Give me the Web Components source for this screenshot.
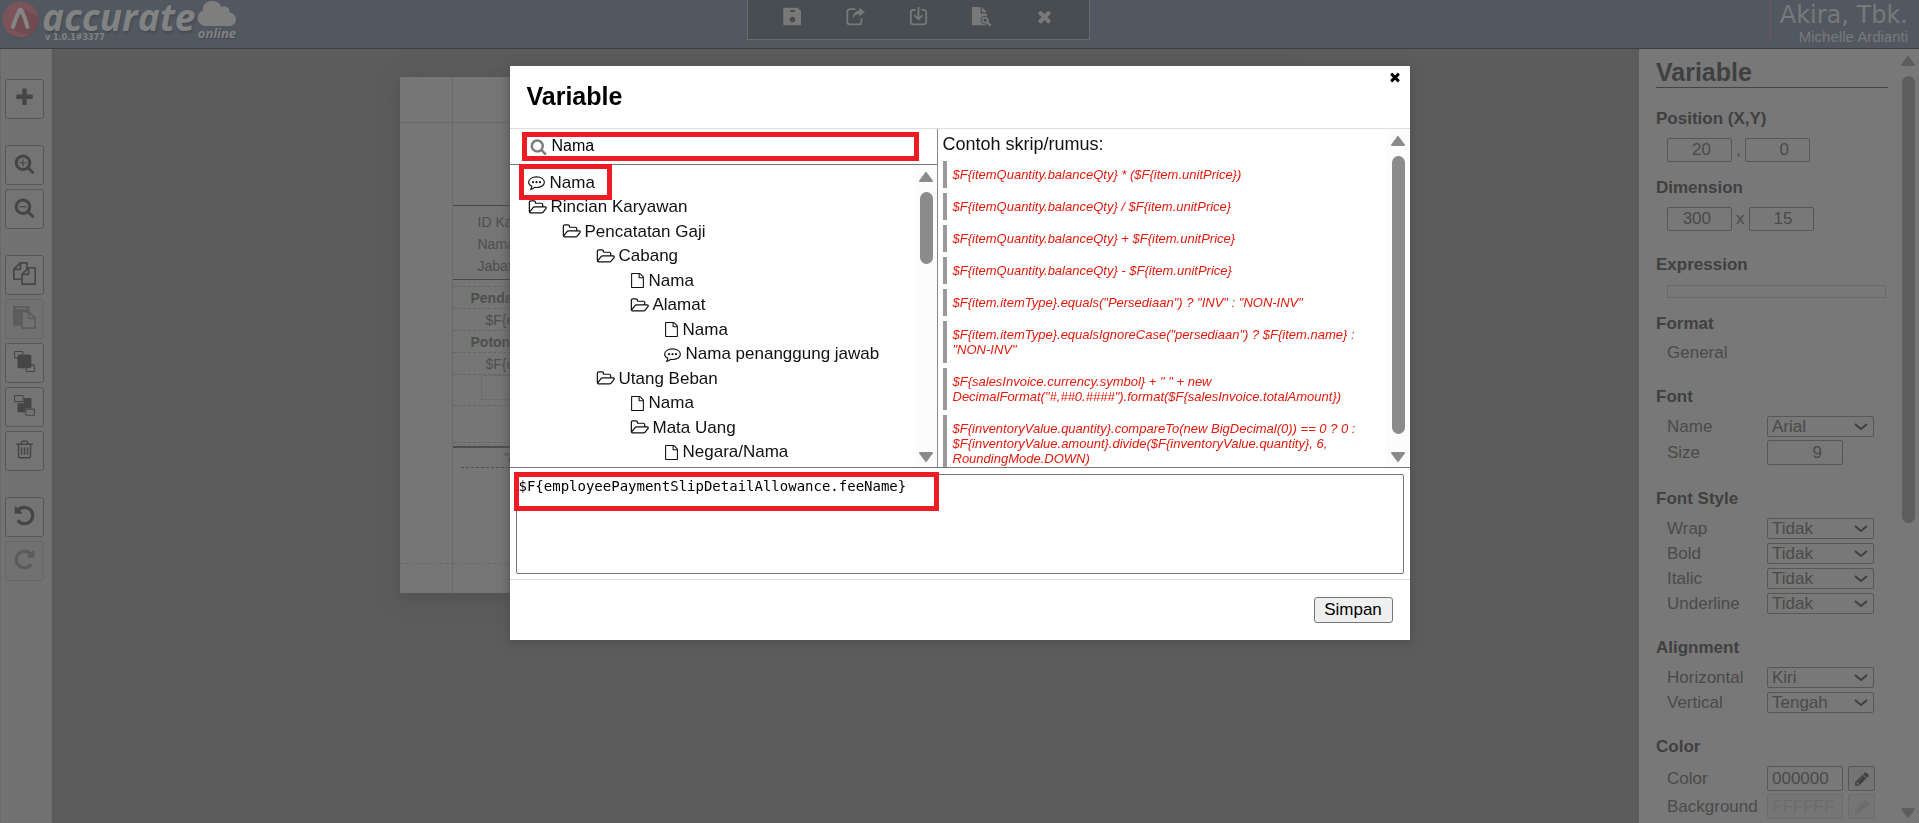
<!DOCTYPE html>
<html lang="id">
<head>
<meta charset="utf-8">
<title>Variable</title>
<style>
  html, body { height: 100%; }
  body {
    margin: 0;
    overflow: hidden;
    background: #5c5c5c;
    font-family: "Liberation Sans", Arial, sans-serif;
    font-size: 17px;
    color: #464646;
  }
</style>
</head>
<body>
<report-designer></report-designer>

<script>
const ICONS = {
  plus: '<path d="M1600 736v192q0 40-28 68t-68 28h-416v416q0 40-28 68t-68 28h-192q-40 0-68-28t-28-68v-416h-416q-40 0-68-28t-28-68v-192q0-40 28-68t68-28h416v-416q0-40 28-68t68-28h192q40 0 68 28t28 68v416h416q40 0 68 28t28 68z"/>',
  search: '<path d="M1216 832q0-185-131.5-316.5t-316.5-131.5-316.5 131.5-131.5 316.5 131.5 316.5 316.5 131.5 316.5-131.5 131.5-316.5zm512 832q0 52-38 90t-90 38q-54 0-90-38l-343-342q-179 124-399 124-143 0-273.5-55.5t-225-150-150-225-55.5-273.5 55.5-273.5 150-225 225-150 273.5-55.5 273.5 55.5 225 150 150 225 55.5 273.5q0 220-124 399l343 343q37 37 37 90z"/>',
  copy: '<path d="M1696 384q40 0 68 28t28 68v1216q0 40-28 68t-68 28h-960q-40 0-68-28t-28-68v-288h-544q-40 0-68-28t-28-68v-672q0-40 20-88t48-76l408-408q28-28 76-48t88-20h416q40 0 68 28t28 68v328q68-40 128-40h416zm-544 213l-299 299h299v-299zm-640-384l-299 299h299v-299zm196 647l316-316v-416h-384v416q0 40-28 68t-68 28h-416v640h512v-256q0-40 20-88t48-76zm956 804v-1152h-384v416q0 40-28 68t-68 28h-416v640h896z"/>',
  paste: '<path d="M768 1664h896v-640h-416q-40 0-68-28t-28-68v-416h-384v1152zm256-1440v-64q0-13-9.5-22.5t-22.5-9.5h-704q-13 0-22.5 9.5t-9.5 22.5v64q0 13 9.5 22.5t22.5 9.5h704q13 0 22.5-9.5t9.5-22.5zm256 672h299l-299-299v299zm512 128v672q0 40-28 68t-68 28h-960q-40 0-68-28t-28-68v-160h-544q-40 0-68-28t-28-68v-1344q0-40 28-68t68-28h1088q40 0 68 28t28 68v328q21 13 36 28l408 408q28 28 48 76t20 88z"/>',
  front: '<g fill="none" stroke="currentColor" stroke-width="90"><rect x="45" y="45" width="700" height="540" rx="60"/><rect x="1045" y="1205" width="700" height="540" rx="60"/></g><rect x="300" y="300" width="1180" height="1180" rx="150"/>',
  back: '<path d="M840 260h560q90 0 90 90v780h-540v350h-560q-90 0-90-90v-690h540z"/><g fill="none" stroke="currentColor" stroke-width="90"><rect x="45" y="45" width="740" height="520" rx="60"/><rect x="1005" y="1205" width="740" height="520" rx="60"/></g>',
  trash: '<path d="M704 736v576q0 14-9 23t-23 9h-64q-14 0-23-9t-9-23v-576q0-14 9-23t23-9h64q14 0 23 9t9 23zm256 0v576q0 14-9 23t-23 9h-64q-14 0-23-9t-9-23v-576q0-14 9-23t23-9h64q14 0 23 9t9 23zm256 0v576q0 14-9 23t-23 9h-64q-14 0-23-9t-9-23v-576q0-14 9-23t23-9h64q14 0 23 9t9 23zm128 724v-948h-896v948q0 22 7 40.5t14.5 27 10.5 8.5h832q3 0 10.5-8.5t14.5-27 7-40.5zm-672-1076h448l-48-117q-7-9-17-11h-317q-10 2-17 11zm928 32v64q0 14-9 23t-23 9h-96v948q0 83-47 143.5t-113 60.5h-832q-66 0-113-58.5t-47-141.5v-952h-96q-14 0-23-9t-9-23v-64q0-14 9-23t23-9h309l70-167q15-37 54-63t79-26h320q40 0 79 26t54 63l70 167h309q14 0 23 9t9 23z"/>',
  undo: '<path d="M1664 896q0 156-61 298t-164 245-245 164-298 61q-172 0-327-72.5t-264-204.5q-7-10-6.5-22.5t8.5-20.5l137-138q10-9 25-9 16 2 23 12 73 95 179 147t225 52q104 0 198.5-40.5t163.5-109.5 109.5-163.5 40.5-198.5-40.5-198.5-109.5-163.5-163.5-109.5-198.5-40.5q-98 0-188 35.5t-160 101.5l137 138q31 30 14 69-17 40-59 40h-448q-26 0-45-19t-19-45v-448q0-42 40-59 39-17 69 14l130 129q107-101 244.5-156.5t284.5-55.5q156 0 298 61t245 164 164 245 61 298z"/>',
  folder: '<path d="M1845 931q0-35-53-35h-1088q-40 0-85.500 21.500t-71.500 52.500l-294 363q-18 24-18 40 0 35 53 35h1088q40 0 86-22t71-53l294-363q18-22 18-39zm-1141-163h768v-160q0-40-28-68t-68-28h-576q-40 0-68-28t-28-68v-64q0-40-28-68t-68-28h-320q-40 0-68 28t-28 68v853l256-315q44-53 116-87.500t140-34.500zm1269 163q0 62-46 120l-295 363q-43 53-116 87.500t-140 34.500h-1088q-92 0-158-66t-66-158v-960q0-92 66-158t158-66h320q92 0 158 66t66 158v32h544q92 0 158 66t66 158v160h192q54 0 99 24.500t67 70.500q15 32 15 68z"/>',
  file: '<path d="M1596 380q28 28 48 76t20 88v1152q0 40-28 68t-68 28h-1344q-40 0-68-28t-28-68v-1600q0-40 28-68t68-28h896q40 0 88 20t76 48zm-444-244v376h376q-10-29-22-41l-313-313q-12-12-41-22zm384 1528v-1024h-416q-40 0-68-28t-28-68v-416h-768v1536h1280z"/>',
  comment: '<path fill="none" stroke="currentColor" stroke-width="120" stroke-linejoin="round" d="M896 300c470 0 830 240 830 560s-360 560-830 560q-100 0-190-14-190 190-440 230 130-150 140-340-340-180-340-436c0-320 360-560 830-560z"/><circle cx="530" cy="860" r="115"/><circle cx="896" cy="860" r="115"/><circle cx="1262" cy="860" r="115"/>',
  pencil: '<path d="M491 1536l91-91-235-235-91 91v107h128v128h107zm523-928q0-22-22-22-10 0-17 7l-542 542q-7 7-7 17 0 22 22 22 10 0 17-7l542-542q7-7 7-17zm-54-192l416 416-832 832h-416v-416zm683 96q0 53-37 90l-166 166-416-416 166-165q36-38 90-38 53 0 91 38l235 234q37 39 37 91z"/>',
  close: '<path d="M1490 1322q0 40-28 68l-136 136q-28 28-68 28t-68-28l-294-294-294 294q-28 28-68 28t-68-28l-136-136q-28-28-28-68t28-68l294-294-294-294q-28-28-28-68t28-68l136-136q28-28 68-28t68 28l294 294 294-294q28-28 68-28t68 28l136 136q28 28 28 68t-28 68l-294 294 294 294q28 28 28 68z"/>',
  save: '<path fill-rule="evenodd" d="M90 60h1290l320 320v1250q0 90-90 90h-1520q-60 0-60-60v-1540q0-60 60-60zm610 220v190h420v-190zm190 640a270 270 0 1 0 1 0z"/>',
  share: '<path fill="none" stroke="currentColor" stroke-width="170" d="M900 205h-520q-260 0-260 260v920q0 260 260 260h820q260 0 260-260v-330"/><path d="M1250 60l540 420-540 420v-240q-440-10-600 440-60-640 600-800z"/>',
  download: '<path fill="none" stroke="currentColor" stroke-width="170" d="M620 265h-200q-250 0-250 250v880q0 250 250 250h950q250 0 250-250v-880q0-250-250-250h-200"/><path d="M810 0h170v960l250-250 120 120-455 455-455-455 120-120 250 250z"/>',
  preview: '<path d="M60 0h760v620h580v1100h-1340q-60 0-60-60v-1600q0-60 60-60zm880 0l460 500h-460z"/><path fill="none" stroke="#484d51" stroke-width="420" stroke-linecap="round" d="M1250 1250l420 420"/><circle cx="1240" cy="1240" r="420" fill="#484d51"/><circle cx="1240" cy="1240" r="240" fill="none" stroke="currentColor" stroke-width="170"/><path fill="none" stroke="currentColor" stroke-width="230" stroke-linecap="round" d="M1470 1470l230 230"/>'
};
ICONS.zoomin = ICONS.search + '<path d="M448 784h272v-272h96v272h272v96h-272v272h-96v-272h-272z"/>';
ICONS.zoomout = ICONS.search + '<path d="M448 784h640v96h-640z"/>';
ICONS.redo = '<g transform="translate(1792 0) scale(-1 1)">' + ICONS.undo + "</g>";

// Small helper: every element clones one template into an open root
function define(name, html, setup) {
  const template = document.createElement("template");
  template.innerHTML = html;
  window.customElements.define(name, class extends HTMLElement {
    constructor() {
      super();
      this.attachShadow({ mode: "open" });
      this.shadowRoot.appendChild(template.content.cloneNode(true));
    }
    connectedCallback() {
      if (setup) setup(this, this.shadowRoot);
    }
  });
}

define("ui-icon", `
  <style>
    :host { display: inline-flex; flex: none; width: var(--icon-width, var(--icon-size, 18px)); height: var(--icon-size, 18px); }
    svg { width: 100%; height: 100%; fill: currentColor; overflow: visible; }
  </style>
  <svg aria-hidden="true"></svg>
`, (host, root) => {
  const svg = root.querySelector("svg");
  const name = host.getAttribute("name");
  svg.setAttribute("viewBox", name === "folder" ? "0 0 1973 1792" : "0 0 1792 1792");
  svg.innerHTML = ICONS[name];
});

define("scroll-rail", `
  <style>
    :host { display: flex; flex-direction: column; align-items: center; gap: 10px; flex: none; width: 23px; box-sizing: border-box; padding: 7px 0 5px; color: #8b8b8b; }
    svg { flex: none; width: 14px; height: 10px; fill: currentColor; stroke: currentColor; stroke-linejoin: round; stroke-width: 2; }
    .track { flex: 1; width: 13px; min-height: 0; }
    .thumb { height: var(--thumb, 50%); border-radius: 7px; background: currentColor; }
  </style>
  <svg viewBox="0 0 14 10"><path d="M7 1l6 8h-12z"/></svg>
  <div class="track"><div class="thumb"></div></div>
  <svg viewBox="0 0 14 10"><path d="M7 9l6-8h-12z"/></svg>
`);

define("brand-logo", `
  <style>
    :host { display: flex; align-items: flex-start; color: #828282; padding: 1px 2px; }
    .badge { width: 38px; height: 38px; }
    .words { display: flex; flex-direction: column; margin-left: 2px; }
    .name { font: italic bold 37px/32px "Open Sans", sans-serif; text-shadow: 1px 2px 2px #454b54; }
    .version { font: bold 8px/10px "DejaVu Sans", sans-serif; margin-left: 3px; }
    .cloud { display: flex; flex-direction: column; align-items: center; margin-left: 2px; }
    .cloud svg { width: 39px; height: 25px; }
    .online { font: italic bold 13px/15px "Open Sans", sans-serif; text-shadow: 1px 1px 1px #454b54; }
  </style>
  <svg class="badge" viewBox="0 0 38 38">
    <circle cx="19" cy="19.500" r="18" fill="#494f58"/>
    <circle cx="18.500" cy="18.500" r="18" fill="#7b545a"/>
    <path d="M18.500 7L36 15a18 18 0 0 1-9 19.500L10 28z" fill="#704b51"/>
    <path d="M11 26c2-7 5-13 6.500-16.500q1-2 2 0c2 4 4.500 10 6 16.500" fill="none" stroke="#858585" stroke-width="4" stroke-linecap="round"/>
  </svg>
  <div class="words"><span class="name">accurate</span><span class="version">v 1.0.1#3377</span></div>
  <div class="cloud">
    <svg viewBox="0 0 39 25" fill="#7e7e7e"><path d="M8 25a8 8 0 0 1-2-15.500C5 3 10 0 15.500 0 20 0 23 2 24.500 6c4-2 8.500 1 8 5.500 4 .5 6.500 3.500 6.500 7 0 4-3 6.500-7 6.500z"/></svg>
    <span class="online">online</span>
  </div>
`);

define("app-header", `
  <style>
    :host { display: grid; grid-template-columns: 1fr 343px calc(50% - 130px); box-sizing: border-box; height: 49px; background: #515861; border-bottom: 1px solid #3f3f3f; color: #797979; }
    nav { display: flex; justify-content: center; gap: 44px; height: 40px; box-sizing: border-box; padding-top: 7px; background: #484d51; border: 1px solid #6a6a6a; border-top: 0; }
    button { display: flex; padding: 0; border: 0; background: none; color: inherit; --icon-size: 19px; }
    .company { justify-self: end; height: 44px; padding: 0 11px 0 9px; border-left: 1px solid #72545a; text-align: right; }
    .name { font: 24px/30px "DejaVu Sans", sans-serif; }
    .user { font-size: 15px; line-height: 14px; }
  </style>
  <brand-logo></brand-logo>
  <nav>
    <button aria-label="Simpan"><ui-icon name="save"></ui-icon></button>
    <button aria-label="Ekspor"><ui-icon name="share"></ui-icon></button>
    <button aria-label="Unduh"><ui-icon name="download"></ui-icon></button>
    <button aria-label="Pratinjau"><ui-icon name="preview"></ui-icon></button>
    <button aria-label="Tutup"><ui-icon name="close"></ui-icon></button>
  </nav>
  <div class="company"><div class="name">Akira, Tbk.</div><div class="user">Michelle Ardianti</div></div>
`);

define("tool-rail", `
  <style>
    :host { display: flex; flex-direction: column; gap: 26px; box-sizing: border-box; width: 52px; padding: 30px 8px 0 4px; background: #727272; border-left: 1px solid #696969; border-right: 1px solid #6c6c6c; --icon-size: 21px; }
    div { display: grid; gap: 4px; }
    button { display: flex; align-items: center; justify-content: center; width: 39px; height: 40px; padding: 0 0 4px; border: 1px solid #575757; border-radius: 3px; background: #747474; color: #454545; }
    button:disabled { border-color: #686868; background: #717171; color: #5c5c5c; }
    .wide { --icon-size: 23px; }
  </style>
  <div><button aria-label="Tambah"><ui-icon name="plus"></ui-icon></button></div>
  <div>
    <button aria-label="Perbesar"><ui-icon name="zoomin"></ui-icon></button>
    <button aria-label="Perkecil"><ui-icon name="zoomout"></ui-icon></button>
  </div>
  <div>
    <button class="wide" aria-label="Salin"><ui-icon name="copy"></ui-icon></button>
    <button class="wide" aria-label="Tempel" disabled><ui-icon name="paste"></ui-icon></button>
    <button aria-label="Ke depan"><ui-icon name="front"></ui-icon></button>
    <button aria-label="Ke belakang"><ui-icon name="back"></ui-icon></button>
    <button aria-label="Hapus"><ui-icon name="trash"></ui-icon></button>
  </div>
  <div>
    <button class="wide" aria-label="Urungkan"><ui-icon name="undo"></ui-icon></button>
    <button class="wide" aria-label="Ulangi" disabled><ui-icon name="redo"></ui-icon></button>
  </div>
`);

define("report-page", `
  <style>
    :host { display: grid; grid-template: 46px 1fr 30px / 53px 1fr; width: 892px; min-height: 516px; background: #767676; box-shadow: 0 4px 18px #505050; color: #4e4e4e; font-size: 14px; }
    .edge { border-bottom: 1px solid #696969; border-right: 1px solid #696969; }
    .foot { border-top: 1px dashed #696969; border-right: 1px solid #696969; }
    .body { border-right: 1px solid #696969; }
    .title { height: 82px; border-bottom: 1px solid #484848; }
    .info { padding: 5px 25px 2px; line-height: 22px; border-bottom: 1px solid #484848; }
    .band { box-sizing: border-box; height: 22px; line-height: 22px; padding-left: 33px; border-bottom: 1px dashed #666; }
    .gap { height: 7px; }
    .head { padding-left: 18px; font-weight: bold; }
    .total { height: 31px; padding: 0 0 6px 28px; }
    .total span { display: block; height: 23px; border: 1px solid #6c6c6c; }
    .blank { height: 37px; }
    .rule { height: 3px; border-bottom: 2px solid #4d4d4d; }
    .terbilang { height: 20px; margin-left: 8px; padding-left: 43px; border-bottom: 1px dashed #505050; line-height: 19px; font-size: 13px; font-style: italic; }
  </style>
  <div class="edge"></div><div class="edge"></div>
  <div class="body"></div>
  <div>
    <div class="title"></div>
    <div class="info">ID Karyawan<br>Nama<br>Jabatan</div>
    <div class="band gap"></div>
    <div class="band head">Pendapatan</div>
    <div class="band">$F{employee}</div>
    <div class="band head">Potongan</div>
    <div class="band">$F{employee}</div>
    <div class="band total"><span></span></div>
    <div class="band blank"></div>
    <div class="rule"></div>
    <div class="band terbilang">"Pembayaran"</div>
  </div>
  <div class="foot"></div><div class="foot"></div>
`);

define("property-section", `
  <style>
    :host { display: block; padding-bottom: 24px; }
    :host([tight]) { padding-bottom: 16px; }
    h3 { margin: 0 0 9px; font-size: 17px; line-height: 20px; color: #404040; }
    .rows { display: grid; gap: 3px; padding-left: 11px; }
    :host([loose]) .rows { gap: 4px; }
  </style>
  <h3></h3><div class="rows"><slot></slot></div>
`, (host, root) => { root.querySelector("h3").textContent = host.getAttribute("heading"); });

define("property-row", `
  <style>
    :host { display: grid; grid-template-columns: 100px auto 1fr; align-items: center; }
    label { line-height: 20px; }
    select, input { box-sizing: border-box; margin: 0; border: 1px solid #575757; border-radius: 2px; background: #787878; color: #4a4a4a; font: 17px/19px "Liberation Sans", Arial, sans-serif; }
    select { width: 107px; height: 21px; padding: 0 4px; appearance: none; background-repeat: no-repeat; background-position: right 5px center; background-image: url("data:image/svg+xml,%3Csvg xmlns='http://www.w3.org/2000/svg' width='14' height='9' viewBox='0 0 14 9'%3E%3Cpath d='M1 2l6 5 6-5' fill='none' stroke='%23404040' stroke-width='2'/%3E%3C/svg%3E"); }
    input { width: 76px; height: 25px; padding: 0 4px; }
    input.number { text-align: right; padding-right: 20px; }
    button { display: flex; align-items: center; justify-content: center; width: 27px; height: 25px; margin-left: 5px; padding: 0; border: 1px solid #575757; border-radius: 2px; background: #747474; color: #404040; --icon-size: 16px; }
    :disabled { border-color: #6c6c6c; color: #6c6c6c; background: #757575; }
  </style>
  <label for="field"></label>
`, (host, root) => {
  const value = host.getAttribute("value");
  const kind = host.getAttribute("kind");
  const off = host.hasAttribute("disabled") ? "disabled" : "";
  root.querySelector("label").textContent = host.getAttribute("label");
  const box = document.createElement("template");
  if (kind === "select") box.innerHTML = `<select id="field"><option>${value}</option></select>`;
  else box.innerHTML = `<input id="field" class="${kind}" value="${value}" ${off}>`;
  if (kind === "color") box.innerHTML += `<button aria-label="Ubah warna" ${off}><ui-icon name="pencil"></ui-icon></button>`;
  root.appendChild(box.content);
});

define("property-panel", `
  <style>
    :host { display: flex; width: 280px; background: #787878; overflow: hidden; color: #4a4a4a; }
    .content { flex: 1; min-width: 0; padding: 8px 8px 0 17px; }
    h2 { margin: 0 0 21px; width: 232px; font-size: 25px; line-height: 30px; border-bottom: 1px solid #444; color: #404040; }
    .pair { display: flex; align-items: center; gap: 4px; }
    .pair input { box-sizing: border-box; width: 65px; height: 24px; margin: 0; padding: 0 20px 0 4px; border: 1px solid #575757; border-radius: 2px; background: #787878; color: #4a4a4a; font: 17px "Liberation Sans", Arial, sans-serif; text-align: right; }
    .sep { min-width: 5px; }
    .expression { box-sizing: border-box; width: 219px; height: 13px; margin: 1px 0 0; padding: 0; border: 1px solid #6a6a6a; background: #787878; }
    .text { line-height: 20px; }
    scroll-rail { color: #5e5e5e; width: 22px; --thumb: 447px; }
  </style>
  <div class="content">
    <h2>Variable</h2>
    <property-section heading="Position (X,Y)" tight>
      <div class="pair"><input aria-label="X" value="20"><span class="sep">,</span><input aria-label="Y" value="0"></div>
    </property-section>
    <property-section heading="Dimension">
      <div class="pair"><input aria-label="Width" value="300"><span class="sep">x</span><input aria-label="Height" value="15"></div>
    </property-section>
    <property-section heading="Expression" tight><input class="expression" aria-label="Expression"></property-section>
    <property-section heading="Format"><div class="text">General</div></property-section>
    <property-section heading="Font">
      <property-row label="Name" kind="select" value="Arial"></property-row>
      <property-row label="Size" kind="number" value="9"></property-row>
    </property-section>
    <property-section heading="Font Style" loose>
      <property-row label="Wrap" kind="select" value="Tidak"></property-row>
      <property-row label="Bold" kind="select" value="Tidak"></property-row>
      <property-row label="Italic" kind="select" value="Tidak"></property-row>
      <property-row label="Underline" kind="select" value="Tidak"></property-row>
    </property-section>
    <property-section heading="Alignment" loose>
      <property-row label="Horizontal" kind="select" value="Kiri"></property-row>
      <property-row label="Vertical" kind="select" value="Tengah"></property-row>
    </property-section>
    <property-section heading="Color">
      <property-row label="Color" kind="color" value="000000"></property-row>
      <property-row label="Background" kind="color" value="FFFFFF" disabled></property-row>
    </property-section>
  </div>
  <scroll-rail></scroll-rail>
`);

define("tree-item", `
  <style>
    :host { display: flex; align-items: center; gap: 5px; padding-left: calc(var(--level, 0) * 34px); white-space: nowrap; position: relative; --icon-size: 17px; }
    :host([icon="folder"]) { --icon-width: 19px; gap: 4px; }
    :host([icon="file"]) { --icon-width: 15px; gap: 4px; }
    :host([marked])::after { content: ""; position: absolute; left: -9px; top: -7px; width: 83px; height: 26px; border: 5px solid #ed1c24; }
  </style>
  <span><slot></slot></span>
`, (host, root) => {
  host.style.setProperty("--level", host.getAttribute("level") || 0);
  const icon = document.createElement("ui-icon");
  icon.setAttribute("name", host.getAttribute("icon"));
  root.querySelector("span").before(icon);
});

define("script-sample", `
  <style>
    :host { display: block; padding: 6px 0 6px 6px; border-left: 4px solid #999; color: #e2190b; font-size: 13px; font-style: italic; line-height: 15px; }
  </style>
  <slot></slot>
`);

define("variable-dialog", `
  <style>
    :host { display: block; width: 900px; background: #fff; color: #111; box-shadow: 0 2px 10px #4c4c4c; }
    header { display: flex; justify-content: space-between; box-sizing: border-box; height: 63px; padding: 14px 8px 0 17px; border-bottom: 1px solid #ddd; }
    h1 { margin: 0; font-size: 25px; line-height: 32px; color: #000; }
    .close { display: flex; align-self: flex-start; margin: -10px 0 0; padding: 0; border: 0; background: none; color: #000; --icon-size: 14px; }
    .panes { display: grid; grid-template-columns: 428px 1fr; height: 338px; border-bottom: 1px solid #777; }
    .left { display: grid; grid-template-rows: 36px 1fr; min-height: 0; border-right: 1px solid #888; }
    .search { display: flex; box-sizing: border-box; padding: 3px 18px 3px 12px; border-bottom: 1px solid #777; }
    .field { display: flex; flex: 1; align-items: center; padding-left: 3px; gap: 3px; border: 5px solid #ed1c24; color: #7c7c7c; --icon-size: 17px; }
    .field input { flex: 1; min-width: 0; height: 19px; margin: 0; padding: 0 2px; border: 0; background: none; color: #000; font: 16px "Liberation Sans", Arial, sans-serif; outline: 0; }
    .scroller { display: flex; min-height: 0; overflow: hidden; }
    .left .scroller { overflow: visible; }
    .tree { flex: 1; display: grid; grid-auto-rows: 24px 25px; padding: 6px 0 0 18px; }
    .samples { flex: 1; display: flex; flex-direction: column; gap: 5px; padding: 4px 6px 0 5px; }
    .samples p { margin: 0; font-size: 18px; line-height: 23px; }
    scroll-rail { background: #fcfcfc; }
    .left scroll-rail { width: 21px; }
    .editor { position: relative; padding: 6px 6px 5px; border-bottom: 1px solid #ddd; }
    textarea { display: block; box-sizing: border-box; width: 100%; height: 100px; margin: 0; padding: 2px; border: 1px solid #767676; border-radius: 2px; background: #fff; color: #000; font: 14px/18px "DejaVu Sans Mono", monospace; resize: none; }
    .mark { position: absolute; left: 4px; top: 4px; width: 415px; height: 29px; border: 5px solid #ed1c24; pointer-events: none; }
    footer { display: flex; justify-content: flex-end; padding: 17px; }
    .save { box-sizing: border-box; width: 79px; height: 26px; padding: 0; border: 1px solid #767676; border-radius: 3px; background: #efefef; color: #000; font: 17px/22px "Liberation Sans", Arial, sans-serif; }
  </style>
  <header>
    <h1>Variable</h1>
    <button class="close" aria-label="Tutup"><ui-icon name="close"></ui-icon></button>
  </header>
  <div class="panes">
    <div class="left">
      <div class="search"><div class="field"><ui-icon name="search"></ui-icon><input aria-label="Cari" value="Nama"></div></div>
      <div class="scroller">
        <div class="tree">
          <tree-item icon="comment" marked>Nama</tree-item>
          <tree-item icon="folder">Rincian Karyawan</tree-item>
          <tree-item icon="folder" level="1">Pencatatan Gaji</tree-item>
          <tree-item icon="folder" level="2">Cabang</tree-item>
          <tree-item icon="file" level="3">Nama</tree-item>
          <tree-item icon="folder" level="3">Alamat</tree-item>
          <tree-item icon="file" level="4">Nama</tree-item>
          <tree-item icon="comment" level="4">Nama penanggung jawab</tree-item>
          <tree-item icon="folder" level="2">Utang Beban</tree-item>
          <tree-item icon="file" level="3">Nama</tree-item>
          <tree-item icon="folder" level="3">Mata Uang</tree-item>
          <tree-item icon="file" level="4">Negara/Nama</tree-item>
        </div>
        <scroll-rail style="--thumb: 72px"></scroll-rail>
      </div>
    </div>
    <div class="scroller">
      <div class="samples">
        <p>Contoh skrip/rumus:</p>
        <script-sample>$F{itemQuantity.balanceQty} * ($F{item.unitPrice})</script-sample>
        <script-sample>$F{itemQuantity.balanceQty} / $F{item.unitPrice}</script-sample>
        <script-sample>$F{itemQuantity.balanceQty} + $F{item.unitPrice}</script-sample>
        <script-sample>$F{itemQuantity.balanceQty} - $F{item.unitPrice}</script-sample>
        <script-sample>$F{item.itemType}.equals("Persediaan") ? "INV" : "NON-INV"</script-sample>
        <script-sample>$F{item.itemType}.equalsIgnoreCase("persediaan") ? $F{item.name} : "NON-INV"</script-sample>
        <script-sample>$F{salesInvoice.currency.symbol} + " " + new DecimalFormat("#,##0.####").format($F{salesInvoice.totalAmount})</script-sample>
        <script-sample>$F{inventoryValue.quantity}.compareTo(new BigDecimal(0)) == 0 ? 0 : $F{inventoryValue.amount}.divide($F{inventoryValue.quantity}, 6, RoundingMode.DOWN)</script-sample>
      </div>
      <scroll-rail style="--thumb: 278px"></scroll-rail>
    </div>
  </div>
  <div class="editor">
    <textarea aria-label="Ekspresi" spellcheck="false">$F{employeePaymentSlipDetailAllowance.feeName}</textarea>
    <div class="mark"></div>
  </div>
  <footer><button class="save">Simpan</button></footer>
`);

define("report-designer", `
  <style>
    :host { display: flex; flex-direction: column; height: 100vh; }
    .work { flex: 1; display: flex; min-height: 0; }
    .canvas { flex: 1; display: flex; justify-content: center; align-items: flex-start; padding-top: 28px; overflow: hidden; }
    tool-rail, property-panel { flex: none; }
    .overlay { position: fixed; inset: 0; display: flex; justify-content: center; align-items: flex-start; padding-top: 8vh; }
  </style>
  <app-header></app-header>
  <div class="work">
    <tool-rail></tool-rail>
    <div class="canvas"><report-page></report-page></div>
    <property-panel></property-panel>
  </div>
  <div class="overlay"><variable-dialog role="dialog" aria-label="Variable"></variable-dialog></div>
`);
</script>
</body>
</html>
